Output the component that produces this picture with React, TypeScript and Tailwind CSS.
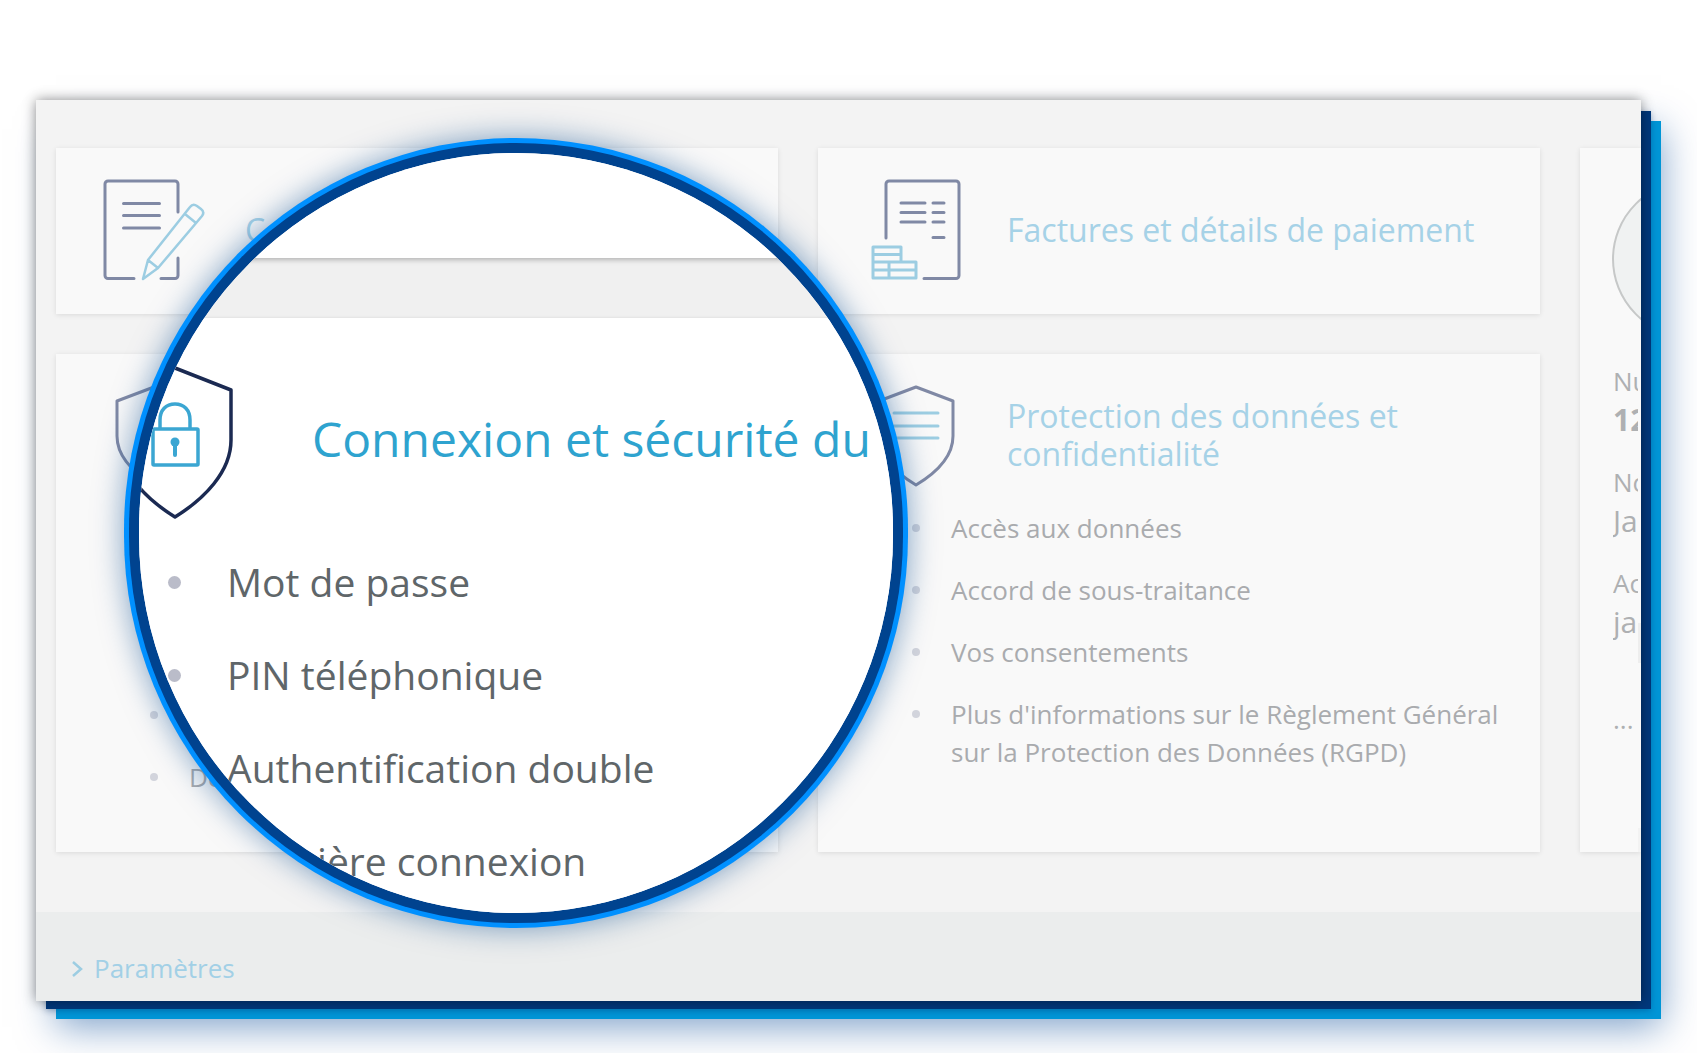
const docStroke = '#8089a5';
const tint = '#9ccde2';

function ContractIcon() {
  return (
    <svg viewBox="100 175 110 110" className="w-[110px] h-[110px] shrink-0 ml-[44px] mt-[27px]" fill="none" strokeLinecap="round" strokeLinejoin="round">
      <path d="M134 278.500H108a3 3 0 0 1-3-3V184a3 3 0 0 1 3-3h67a3 3 0 0 1 3 3v28M178 258v17.500a3 3 0 0 1-3 3h-14" stroke={docStroke} strokeWidth="3" />
      <path d="M123.500 203.500h36M123.500 215.500h36M123.500 228h36" stroke={docStroke} strokeWidth="3" />
      <path d="M143 279l5-19 42-53q3-4 7-1l4 3q4 3 1 7l-44 52zM148 260l10 8M185 214l11 9" stroke={tint} strokeWidth="2.500" />
    </svg>
  );
}

function InvoiceIcon() {
  return (
    <svg viewBox="868 175 100 110" className="w-[100px] h-[110px] shrink-0 ml-[50px] mt-[27px]" fill="none" strokeLinecap="round" strokeLinejoin="round">
      <path d="M886 238V184a3 3 0 0 1 3-3h67a3 3 0 0 1 3 3v91.500a3 3 0 0 1-3 3h-32" stroke={docStroke} strokeWidth="3" />
      <path d="M901 203h24M901 212.500h24M901 222h24M933 203h11M933 212.500h11M933 222h11M933 237.500h11" stroke={docStroke} strokeWidth="3" />
      <path d="M873 247h28v15h15v16h-43zM873 254.500h28M873 262h28M873 270h43M889 262v16" stroke={tint} strokeWidth="3" strokeLinecap="square" />
    </svg>
  );
}

function ShieldOutline({ children }: { children?: React.ReactNode }) {
  return (
    <svg viewBox="0 0 84 108" className="w-[84px] h-[108px] shrink-0 ml-[56px] mt-[28px]" fill="none" strokeLinejoin="round" strokeLinecap="round">
      <path d="M42 5L79 19V54C79 75 62 91 42 103C22 91 5 75 5 54V19Z" stroke={docStroke} strokeWidth="3" />
      {children}
    </svg>
  );
}

function BulletList({ items }: { items: string[] }) {
  return (
    <ul className="pl-[94px] pr-[30px] text-[26px] leading-[38px] text-[#a9abae]">
      {items.map((item) => (
        <li key={item} className="flex items-start py-3">
          <span className="w-2 h-2 mt-[15px] mr-[31px] shrink-0 rounded-full bg-[#d2d4dc]" />
          <span>{item}</span>
        </li>
      ))}
    </ul>
  );
}

function Card({ className, children }: { className?: string; children: React.ReactNode }) {
  return <div className={`bg-[#f9f9f9] shadow-[0_1px_5px_rgba(0,0,0,0.1)] ${className ?? ''}`}>{children}</div>;
}

function MainPanel() {
  return (
    <div className="relative w-[1605px] h-[901px] flex flex-col overflow-hidden bg-[#f3f3f3] shadow-[0_0_12px_rgba(0,0,0,0.45)]">
      <div className="h-[812px] pt-[48px] pl-[20px] grid grid-cols-[722px_722px_61px] grid-rows-[166px_498px] gap-10">
        <Card className="flex">
          <ContractIcon />
          <h3 className="ml-[35px] mt-[62px] text-[32px] leading-[40px] whitespace-nowrap text-[#a6d2e7]">Conditions générales</h3>
        </Card>
        <Card className="flex">
          <InvoiceIcon />
          <h3 className="ml-[39px] mt-[62px] text-[32px] leading-[40px] whitespace-nowrap text-[#a6d2e7]">Factures et détails de paiement</h3>
        </Card>
        <Card className="relative row-span-2 overflow-hidden">
          <div className="w-[158px] h-[158px] mt-[32px] ml-[32px] rounded-full bg-[#f0f2f2] border-2 border-[#c6c8c8]" />
          <div className="w-[25px] ml-[33px] mt-[24px] overflow-hidden whitespace-nowrap text-[#aeb0b2]">
            <p className="text-[26px] leading-[38px]">Numéro</p>
            <p className="text-[30px] leading-[40px] font-bold">123456</p>
            <p className="text-[26px] leading-[38px] mt-[23px]">Nom</p>
            <p className="text-[30px] leading-[40px]">Jan</p>
            <p className="text-[26px] leading-[38px] mt-[23px]">Accès</p>
            <p className="text-[30px] leading-[40px]">jan</p>
            <p className="text-[26px] leading-[38px] mt-[58px]">...</p>
          </div>
          <span className="absolute right-0 top-[475px] w-[3px] h-[40px] bg-[#eeeeee]" />
          <span className="absolute right-0 bottom-0 w-[3px] h-[24px] bg-[#f3f3f3]" />
        </Card>
        <Card>
          <div className="flex h-[206px]">
            <ShieldOutline />
            <h3 className="ml-[49px] mt-[43px] text-[32px] leading-[38px] whitespace-nowrap text-[#a6d2e7]">Connexion et sécurité du</h3>
          </div>
          <BulletList items={['Mot de passe', 'PIN téléphonique', 'Authentification double', 'Dernière connexion']} />
        </Card>
        <Card>
          <div className="flex h-[143px]">
            <ShieldOutline>
              <path d="M20 31h44M20 44h44M20 56h44" stroke="#9ccde2" strokeWidth="3" />
            </ShieldOutline>
            <h3 className="ml-[49px] mt-[43px] w-[500px] text-[32px] leading-[38px] text-[#a6d2e7]">Protection des données et confidentialité</h3>
          </div>
          <BulletList items={['Accès aux données', 'Accord de sous-traitance', 'Vos consentements', "Plus d'informations sur le Règlement Général sur la Protection des Données (RGPD)"]} />
        </Card>
      </div>
      <div className="flex-1 flex items-center pl-[35px] pt-[24px] bg-[#ebeded]">
        <svg viewBox="0 0 14 18" className="w-[14px] h-[18px] shrink-0" fill="none" stroke="#9ccde2" strokeWidth="2.500">
          <path d="M2 2l8 7-8 7" />
        </svg>
        <span className="ml-[9px] text-[26px] text-[#a2d0e6]">Paramètres</span>
      </div>
    </div>
  );
}

function Lens() {
  return (
    <div className="absolute left-[124px] top-[138px] w-[784px] h-[790px] rounded-full bg-[#0090ff] p-[5px] shadow-[0_0_30px_rgba(0,70,140,0.5)]">
      <div className="w-full h-full rounded-full bg-[#00438f] p-[10px]">
        <div className="w-full h-full rounded-full overflow-hidden flex flex-col bg-white">
          <div className="h-[105px] shrink-0 bg-white shadow-[0_2px_5px_rgba(0,0,0,0.25)] relative" />
          <div className="h-[60px] shrink-0 bg-[#f0f0f0]" />
          <div className="flex-1 bg-white shadow-[0_-1px_2px_rgba(0,0,0,0.06)]">
            <div className="flex h-[218px]">
              <svg viewBox="117 366 116 154" className="w-[116px] h-[154px] shrink-0 ml-[-22px] mt-[48px]" fill="none" strokeLinejoin="round">
                <path d="M175 368L231 390V440C231 472 204 499 175 517C146 499 119 472 119 440V390Z" stroke="#1b2a52" strokeWidth="3.500" />
                <rect x="153" y="429" width="45" height="36" stroke="#3ba6d2" strokeWidth="3.500" rx="1" />
                <path d="M160 429V420C160 410 166 404 175 404C184 404 190 410 190 420V429" stroke="#3ba6d2" strokeWidth="3.500" />
                <circle cx="175" cy="442" r="4.500" fill="#3ba6d2" />
                <path d="M175 444V455" stroke="#3ba6d2" strokeWidth="4" strokeLinecap="round" />
              </svg>
              <h3 className="ml-[79px] mt-[91px] text-[48px] leading-[60px] whitespace-nowrap text-[#2ea3cf]">Connexion et sécurité du</h3>
            </div>
            <ul className="pl-[29px] text-[39px] text-[#5f6669]">
              {['Mot de passe', 'PIN téléphonique', 'Authentification double', 'Dernière connexion'].map((item) => (
                <li key={item} className="flex items-center h-[93px]">
                  <span className="w-[13px] h-[13px] mr-[46px] shrink-0 rounded-full bg-[#babcc9]" />
                  <span>{item}</span>
                </li>
              ))}
            </ul>
          </div>
        </div>
      </div>
    </div>
  );
}

export default function App() {
  return (
    <div className="relative w-[1697px] h-[1053px] overflow-hidden bg-white pt-[100px] pl-[36px] font-['Open_Sans',sans-serif]">
      <div className="absolute left-[56px] top-[121px] w-[1605px] h-[898px] bg-[#0095d6] shadow-[0_8px_36px_rgba(0,70,150,0.5)]" />
      <div className="absolute left-[46px] top-[111px] w-[1605px] h-[898px] bg-[#00387c] shadow-[0_2px_6px_rgba(0,50,110,0.3)]" />
      <MainPanel />
      <Lens />
    </div>
  );
}
